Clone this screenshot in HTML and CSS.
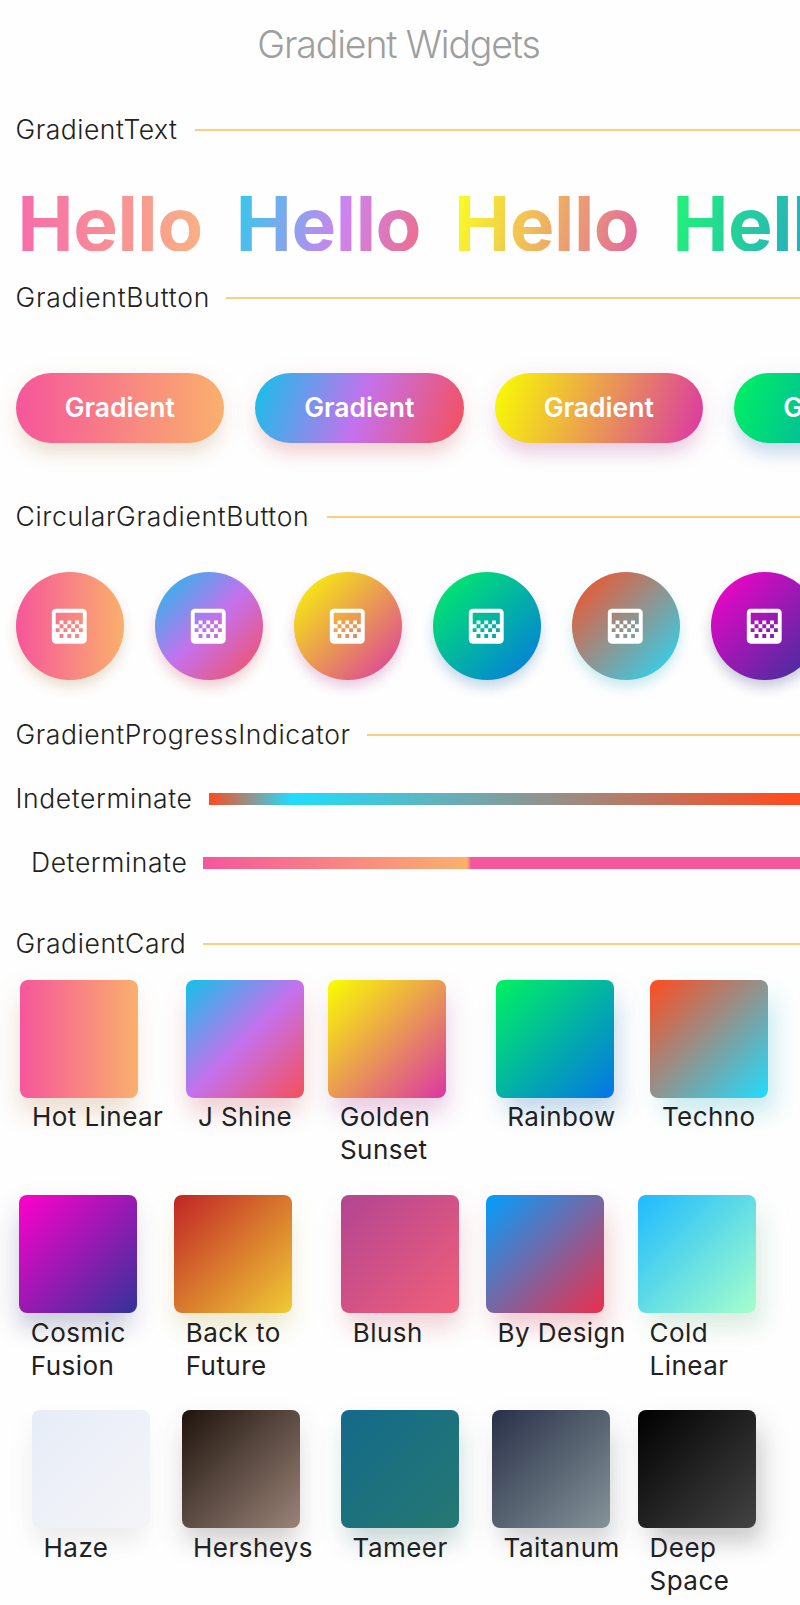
FILE: index.html
```html
<!DOCTYPE html>
<html lang="en">
<head>
<meta charset="utf-8">
<title>Gradient Widgets</title>
<link rel="stylesheet" href="styles.css">
</head>
<body>
<svg class="defs" aria-hidden="true"><symbol id="gradient" viewBox="0 0 24 24"><path d="M11 9h2v2h-2V9zm-2 2h2v2H9v-2zm4 0h2v2h-2v-2zm2-2h2v2h-2V9zM7 9h2v2H7V9zm12-6H5c-1.1 0-2 .9-2 2v14c0 1.1.9 2 2 2h14c1.1 0 2-.9 2-2V5c0-1.1-.9-2-2-2zM9 18H7v-2h2v2zm4 0h-2v-2h2v2zm4 0h-2v-2h2v2zm2-7h-2v2h2v2h-2v-2h-2v2h-2v-2h-2v2H9v-2H7v2H5v-2h2v-2H5V5h14v6z"/></symbol></svg>
<main class="app">
  <h1 class="title">Gradient Widgets</h1>

  <div class="heading h-text"><h2>GradientText</h2><i></i></div>
  <div class="hellos">
    <span class="hot">Hello</span><span class="jshine">Hello</span><span class="golden">Hello</span><span class="rainbow">Hello</span>
  </div>

  <div class="heading h-button"><h2>GradientButton</h2><i></i></div>
  <div class="buttons">
    <button class="hot">Gradient</button><button class="jshine">Gradient</button><button class="golden">Gradient</button><button class="rainbow">Gradient</button>
  </div>

  <div class="heading h-circular"><h2>CircularGradientButton</h2><i></i></div>
  <div class="circles">
    <button class="hot"><svg><use href="#gradient"/></svg></button>
    <button class="jshine"><svg><use href="#gradient"/></svg></button>
    <button class="golden"><svg><use href="#gradient"/></svg></button>
    <button class="rainbow"><svg><use href="#gradient"/></svg></button>
    <button class="techno"><svg><use href="#gradient"/></svg></button>
    <button class="cosmic"><svg><use href="#gradient"/></svg></button>
  </div>

  <div class="heading h-progress"><h2>GradientProgressIndicator</h2><i></i></div>
  <div class="progress indeterminate"><span>Indeterminate</span><i></i></div>
  <div class="progress determinate"><span>Determinate</span><i></i></div>

  <div class="heading h-card"><h2>GradientCard</h2><i></i></div>
  <div class="cards row1">
    <div class="card"><div class="swatch hot"></div><p>Hot Linear</p></div>
    <div class="card"><div class="swatch jshine"></div><p>J Shine</p></div>
    <div class="card"><div class="swatch golden"></div><p>Golden<br>Sunset</p></div>
    <div class="card"><div class="swatch rainbow"></div><p>Rainbow</p></div>
    <div class="card"><div class="swatch techno"></div><p>Techno</p></div>
  </div>
  <div class="cards row2">
    <div class="card"><div class="swatch cosmic"></div><p>Cosmic<br>Fusion</p></div>
    <div class="card"><div class="swatch future"></div><p>Back to<br>Future</p></div>
    <div class="card"><div class="swatch blush"></div><p>Blush</p></div>
    <div class="card"><div class="swatch design"></div><p>By Design</p></div>
    <div class="card"><div class="swatch cold"></div><p>Cold<br>Linear</p></div>
  </div>
  <div class="cards row3">
    <div class="card"><div class="swatch haze"></div><p>Haze</p></div>
    <div class="card"><div class="swatch hersheys"></div><p>Hersheys</p></div>
    <div class="card"><div class="swatch tameer"></div><p>Tameer</p></div>
    <div class="card"><div class="swatch taitanum"></div><p>Taitanum</p></div>
    <div class="card"><div class="swatch space"></div><p>Deep<br>Space</p></div>
  </div>
</main>
</body>
</html>
```
FILE: styles.css
```css
* { box-sizing: border-box; }
body { margin: 0; background: #fefefe; color: #212121; font-family: Inter, "Liberation Sans", sans-serif; }
.defs { display: block; width: 0; height: 0; }
.app { width: 800px; height: 1605px; overflow: hidden; --dir: 135deg; }
h1, h2, p { margin: 0; }
.title { height: 90px; line-height: 90px; padding-right: 3px; text-align: center; font-size: 37.5px; font-weight: 300; color: #9e9e9e; letter-spacing: -1.15px; }

.heading { height: 40px; display: flex; align-items: center; padding-left: 15.5px; }
.heading h2 { width: var(--w); padding-bottom: 2px; font-size: 26.5px; font-weight: 300; letter-spacing: var(--ls); white-space: nowrap; flex: none; }
.heading i { flex: 1; height: 2px; background: #ffcc80; }
.h-text { margin-top: 20px; --w: 179.5px; --ls: .5px; }
.h-button { --w: 210.5px; --ls: .76px; }
.h-circular { margin-top: 55px; --w: 311px; --ls: .67px; }
.h-progress { margin-top: 35px; --w: 351.5px; --ls: .55px; }
.h-card { margin-top: 29px; --w: 187.5px; --ls: .6px; }

.hellos { display: flex; gap: 26.3px; height: 128px; padding: 24px 0 0 15px; --dir: 105.5deg; }
.hellos span { flex: none; width: 192px; height: 77px; padding: 18.5px 0 0 2.5px; font-size: 75px; font-weight: 700; line-height: 61px; letter-spacing: -.4px; color: transparent; opacity: .86; }

button { border: 0; padding: 0; font-family: inherit; flex: none; }
.buttons { display: flex; gap: 31px; padding: 55px 0 0 15.5px; height: 124px; --dir: 108.4deg; }
.buttons button { width: 208.5px; height: 69.5px; padding-bottom: 2px; border-radius: 35px; color: #fff; font-size: 26.5px; font-weight: 600; box-shadow: 0 15px 16px -5px var(--shadow), 0 7px 24px 2px var(--faint); }
.circles { display: flex; gap: 31px; padding: 35px 0 0 15.5px; height: 143px; }
.circles button { width: 108px; height: 108px; border-radius: 50%; display: grid; place-items: center; box-shadow: 0 8px 14px -3px var(--shadow), 0 7px 14px var(--shadow); }
.circles svg { width: 46.5px; height: 46.5px; fill: #fff; }

.progress { display: flex; align-items: center; height: 64px; font-size: 26.5px; font-weight: 300; letter-spacing: .6px; }
.progress span { flex: none; padding-bottom: 2px; }
.progress i { flex: 1; height: 12px; }
.indeterminate { padding-left: 15.5px; margin-top: 12px; }
.indeterminate span { width: 193.5px; }
.indeterminate i { background: linear-gradient(90deg, #ff4b1f, #1fddff 14%, #ff4b1f 98%); }
.determinate { padding-left: 31px; }
.determinate span { width: 172px; }
.determinate i { background: linear-gradient(90deg, #f6569b, #fab06c 264px, #f6569b 268px); }

.cards { display: grid; height: 215.4px; }
.row1 { margin-top: 15.5px; padding-left: 20.3px; grid-template-columns: 166px 142.1px 167.3px 154.6px 118px; }
.row2 { padding-left: 19.2px; grid-template-columns: 154.9px 167px 144.9px 152px 118px; }
.row3 { padding-left: 32px; grid-template-columns: 149.5px 159.5px 151px 146px 118px; }
.swatch { width: 118px; height: 118px; border-radius: 8px; box-shadow: var(--dx) 20px 20px -6px var(--shadow), var(--dx) 13px 28px 2px var(--faint); }
.card p { position: relative; margin: 2.7px 0 0 11.6px; font-size: 26px; line-height: 33px; letter-spacing: .45px; white-space: nowrap; }
.card:nth-child(1) { --dx: -3px; }
.card:nth-child(2) { --dx: 0px; }
.card:nth-child(3) { --dx: 3px; }
.card:nth-child(4) { --dx: 6px; }
.card:nth-child(5) { --dx: 9px; }

.hot { background-image: linear-gradient(90deg, #f6569b, #fab06c); --shadow: #b4783c24; --faint: #b4783c1c; }
.jshine { background-image: linear-gradient(var(--dir), #12c2e9, #c471ed, #f64f59); --shadow: #c83c4624; --faint: #c83c461c; }
.golden { background-image: linear-gradient(var(--dir), #f9ff00, #db36a4); --shadow: #a8288724; --faint: #a828871c; }
.rainbow { background-image: linear-gradient(var(--dir), #00f260, #0575e6); --shadow: #0b5db024; --faint: #0b5db01c; }
.techno { background-image: linear-gradient(var(--dir), #ff4b1f, #1fddff); --shadow: #1cacc024; --faint: #1cacc01c; }
.cosmic { background-image: linear-gradient(var(--dir), #ff00cc, #333399); --shadow: #26266e24; --faint: #26266e1c; }
.future { background-image: linear-gradient(var(--dir), #c02425, #f0cb35); --shadow: #b8a12d24; --faint: #b8a12d1c; }
.blush { background-image: linear-gradient(var(--dir), #b24592, #f15f79); --shadow: #c84d6224; --faint: #c84d621c; }
.design { background-image: linear-gradient(var(--dir), #009fff, #ec2f4b); --shadow: #c4283f24; --faint: #c4283f1c; }
.cold { background-image: linear-gradient(var(--dir), #1fbaff, #a6ffcb); --shadow: #69b98524; --faint: #69b9851c; }
.haze { background-image: linear-gradient(var(--dir), #e6ecf7, #f5f5f7); --shadow: #0000000a; --faint: #00000009; }
.hersheys { background-image: linear-gradient(var(--dir), #1e130c, #9a8478); --shadow: #4a3f3a24; --faint: #4a3f3a1a; }
.tameer { background-image: linear-gradient(var(--dir), #136a8a, #267871); --shadow: #1a5a5524; --faint: #1a5a551a; }
.taitanum { background-image: linear-gradient(var(--dir), #283048, #859398); --shadow: #45505424; --faint: #4550541a; }
.space { background-image: linear-gradient(var(--dir), #000000, #434343); --shadow: #0000001c; --faint: #0000001a; }

.hellos span { background-origin: content-box; background-size: 208px 58.5px; background-position: 2px 0; background-repeat: no-repeat; -webkit-background-clip: text; background-clip: text; }
```
